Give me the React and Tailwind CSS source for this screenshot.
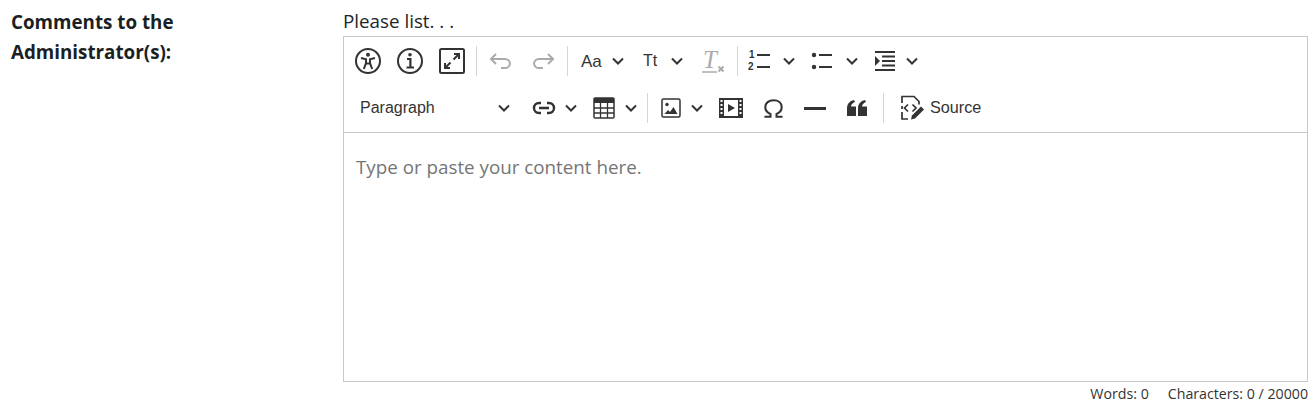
const dark = "#333333";
const gray = "#aaaaaa";

function Chevron() {
  return (
    <svg width="12" height="8" viewBox="0 0 12 8" fill="none" stroke={dark} strokeWidth="2" className="shrink-0">
      <path d="M1 1.5l5 5 5-5" />
    </svg>
  );
}

function Icon({ children }) {
  return (
    <svg width="30" height="30" viewBox="0 0 30 30" fill="none" stroke={dark} strokeWidth="2" className="shrink-0">
      {children}
    </svg>
  );
}

function Btn({ w, children }) {
  return (
    <div className="flex items-center justify-center shrink-0 h-[36px]" style={{ width: w }}>
      {children}
    </div>
  );
}

function Drop({ w, children }) {
  return (
    <div className="flex items-center justify-between shrink-0 h-[36px]" style={{ width: w }}>
      {children}
    </div>
  );
}

function Sep() {
  return <div className="w-px h-[30px] bg-[#d5d5d5] mx-[3px] shrink-0" />;
}

export default function App() {
  return (
    <div className="flex w-[1315px] h-[407px] bg-white text-[#212529] font-['Open_Sans',sans-serif] overflow-hidden">
      <div className="w-[343px] shrink-0 pl-[11px] pt-[7px] font-bold text-[18.8px] leading-[30px] text-[#1b1f23]">
        Comments to the
        <br />
        Administrator(s):
      </div>
      <div className="w-[965px] shrink-0 pt-[9px]">
        <div className="text-[18.8px] leading-[27px] h-[27px] -mt-px mb-px">Please list. . .</div>
        <div className="border border-[#c8c8c8] h-[346px] flex flex-col">
          <div className="h-[96px] border-b border-[#c8c8c8] pl-[3px] pt-[6px] shrink-0 font-['Liberation_Sans',sans-serif]">
            <div className="flex items-center h-[36px]">
              <Btn w={42}>
                <Icon>
                  <circle cx="15" cy="15" r="12" />
                  <circle cx="15" cy="8.8" r="2" fill={dark} stroke="none" />
                  <path d="M8 12l5 1.2v4L10.8 23M22 12l-5 1.2v4L19.2 23M13 17.5h4" />
                </Icon>
              </Btn>
              <Btn w={42}>
                <Icon>
                  <circle cx="15" cy="15" r="12" />
                  <circle cx="15" cy="8.8" r="1.8" fill={dark} stroke="none" />
                  <path d="M12 13h3.4v8M11.5 21.5h7.5" strokeWidth="2.2" />
                </Icon>
              </Btn>
              <Btn w={42}>
                <Icon>
                  <rect x="3" y="3" width="24" height="24" rx="1.5" />
                  <path d="M16.5 13.5l5-5M17 8h5v5M13.5 16.5l-5 5M8 17v5h5" />
                </Icon>
              </Btn>
              <Sep />
              <Btn w={42}>
                <Icon>
                  <path stroke={gray} d="M10 8l-5 5 5 5M5 13h14a5 5 0 0 1 5 4.500a5 5 0 0 1-5 4.500h-4" />
                </Icon>
              </Btn>
              <Btn w={42}>
                <Icon>
                  <path stroke={gray} d="M20 8l5 5-5 5M25 13H11a5 5 0 0 0-5 4.500a5 5 0 0 0 5 4.500h4" />
                </Icon>
              </Btn>
              <Sep />
              <div className="pl-[10px] w-[61px] shrink-0">
                <Drop w={43}>
                  <span className="text-[17px] text-[#333] leading-none">Aa</span>
                  <Chevron />
                </Drop>
              </div>
              <div className="pl-[11px] w-[60px] shrink-0">
                <Drop w={40}>
                  <span className="text-[16px] text-[#333] leading-none">Tt</span>
                  <Chevron />
                </Drop>
              </div>
              <Btn w={42}>
                <Icon>
                  <text x="5" y="22" fontFamily="'Liberation Serif', serif" fontStyle="italic" fontSize="25" fill={gray} stroke="none">
                    T
                  </text>
                  <path stroke={gray} d="M4 26h15" strokeWidth="1.500" />
                  <path stroke={gray} d="M20.500 20.500l5 5M25.500 20.500l-5 5" />
                </Icon>
              </Btn>
              <Sep />
              <div className="pl-[7px] w-[63px] shrink-0">
                <Drop w={47}>
                  <svg width="23" height="24" viewBox="0 0 23 24" fill={dark} className="shrink-0">
                    <text x="1" y="9" fontSize="10" fontWeight="700" fontFamily="'Liberation Sans', sans-serif">1</text>
                    <text x="0" y="21" fontSize="10" fontWeight="700" fontFamily="'Liberation Sans', sans-serif">2</text>
                    <rect x="9" y="5" width="13" height="2" />
                    <rect x="9" y="17" width="13" height="2" />
                  </svg>
                  <Chevron />
                </Drop>
              </div>
              <div className="pl-[7px] w-[63px] shrink-0">
                <Drop w={47}>
                  <svg width="22" height="24" viewBox="0 0 22 24" fill={dark} className="shrink-0">
                    <circle cx="3" cy="6" r="2.200" />
                    <circle cx="3" cy="18" r="2.200" />
                    <rect x="8" y="5" width="13" height="2" />
                    <rect x="8" y="17" width="13" height="2" />
                  </svg>
                  <Chevron />
                </Drop>
              </div>
              <div className="pl-[7px] shrink-0">
                <Drop w={44}>
                  <svg width="22" height="22" viewBox="0 0 22 22" fill={dark} className="shrink-0">
                    <rect x="1" y="1" width="20" height="2" />
                    <rect x="8" y="5.500" width="13" height="2" />
                    <rect x="8" y="10" width="13" height="2" />
                    <rect x="8" y="14.500" width="13" height="2" />
                    <rect x="1" y="19" width="20" height="2" />
                    <path d="M1 6l5 5-5 5z" />
                  </svg>
                  <Chevron />
                </Drop>
              </div>
            </div>
            <div className="flex items-center h-[36px] mt-[11px]">
              <div className="pl-[13px] w-[170px] shrink-0 pr-[7px] flex items-center justify-between">
                <span className="text-[16px] text-[#333]">Paragraph</span>
                <Chevron />
              </div>
              <div className="pl-[15px] w-[73px] shrink-0">
                <Drop w={45}>
                  <svg width="24" height="14" viewBox="0 0 24 14" fill="none" stroke={dark} strokeWidth="2.400" className="shrink-0">
                    <path d="M9 2H7a5 5 0 0 0 0 10h2M15 2h2a5 5 0 0 1 0 10h-2M7 7h10" />
                  </svg>
                  <Chevron />
                </Drop>
              </div>
              <div className="pl-[3px] w-[54px] shrink-0">
                <Drop w={44}>
                  <svg width="22" height="22" viewBox="0 0 22 22" fill="none" stroke={dark} className="shrink-0">
                    <rect x="1" y="1" width="20" height="20" rx="1" strokeWidth="1.500" />
                    <rect x="1" y="1" width="20" height="5" fill={dark} stroke="none" />
                    <path strokeWidth="1.300" d="M1 11h20M1 16h20M7.500 5v16M14.500 5v16" />
                  </svg>
                  <Chevron />
                </Drop>
              </div>
              <Sep />
              <div className="pl-[10px] w-[61px] shrink-0">
                <Drop w={42}>
                  <svg width="20" height="20" viewBox="0 0 20 20" fill="none" stroke={dark} className="shrink-0">
                    <rect x="1" y="1" width="18" height="18" rx="1.500" strokeWidth="1.500" />
                    <circle cx="6" cy="6.500" r="1.700" fill={dark} stroke="none" />
                    <path d="M3.500 16l3.500-4 2 2 3.500-5 4 7z" fill={dark} stroke="none" />
                  </svg>
                  <Chevron />
                </Drop>
              </div>
              <Btn w={38}>
                <svg width="24" height="20" viewBox="0 0 24 20" fill={dark} className="shrink-0">
                  <path fillRule="evenodd" d="M0 0h24v20H0zM5 2v16h14V2zM1.500 2v2h2V2zM1.500 6v2h2V6zM1.500 10v2h2v-2zM1.500 14v2h2v-2zM20.500 2v2h2V2zM20.500 6v2h2V6zM20.500 10v2h2v-2zM20.500 14v2h2v-2z" />
                  <path d="M9 6l7 4-7 4z" />
                </svg>
              </Btn>
              <Btn w={46}>
                <svg width="21" height="19" viewBox="0 0 24 22" fill="none" stroke={dark} strokeWidth="2.400" className="shrink-0">
                  <path d="M1.500 20.500h7v-3.200C4.500 15.500 2.500 12.500 2.500 9.500 2.500 4.500 6.500 1.500 12 1.500s9.500 3 9.500 8c0 3-2 6-6 7.800v3.200h7" />
                </svg>
              </Btn>
              <Btn w={38}>
                <div className="w-[22px] h-[3px] bg-[#333]" />
              </Btn>
              <Btn w={46}>
                <svg width="20" height="16" viewBox="0 0 20 16" fill={dark} className="shrink-0">
                  <path d="M0 16V8.500C0 4 2.500 1 7 0l1 2C5.500 3 4.200 4.500 4 6.500h5V16zM11 16V8.500C11 4 13.500 1 18 0l1 2c-2.500 1-3.800 2.500-4 4.500h5V16z" />
                </svg>
              </Btn>
              <Sep />
              <div className="pl-[12px] flex items-center gap-[5px]">
                <svg width="26" height="26" viewBox="0 0 26 26" fill="none" stroke={dark} strokeWidth="1.700" className="shrink-0">
                  <path d="M3 8V1.500h12l5 5v3M3 11v3M3 17v7h6" />
                  <path d="M9 9.500l-3.500 3.500 3.500 3.500M13.500 9.500l3.500 3.500-3.500 3.500" />
                  <path d="M12 24.500l1-4 9-9 3 3-9 9z" fill={dark} stroke="none" />
                </svg>
                <span className="text-[16.2px] text-[#333] mb-[2px]">Source</span>
              </div>
            </div>
          </div>
          <div className="flex-1 pl-[12px] pt-[21px] text-[18.8px] leading-[27px] text-[#757575]">
            Type or paste your content here.
          </div>
        </div>
        <div className="flex justify-end gap-[19px] text-[14.2px] leading-[22px] text-[#333] pt-px">
          <span>Words: 0</span>
          <span>Characters: 0 / 20000</span>
        </div>
      </div>
    </div>
  );
}
